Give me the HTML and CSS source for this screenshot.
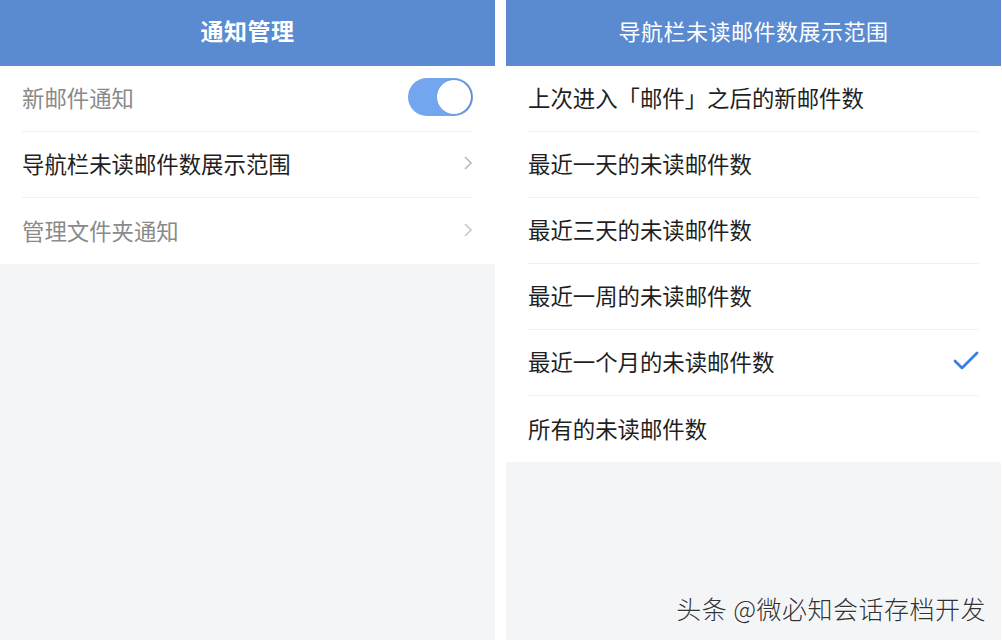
FILE: index.html
```html
<!DOCTYPE html>
<html lang="zh-CN">
<head>
  <meta charset="UTF-8" />
  <meta name="viewport" content="width=device-width, initial-scale=1.0"/>
  <title>通知管理</title>
  <link rel="stylesheet" href="styles.css">
</head>
<body>

  <div class="screens">

    <!-- 通知管理 -->
    <div class="screen">
      <div class="header header-bold">通知管理</div>
      <ul class="list">
        <li class="item muted">
          <span>新邮件通知</span>
          <span class="switch on"><span class="knob"></span></span>
        </li>
        <li class="item">
          <span>导航栏未读邮件数展示范围</span>
          <svg class="chevron" viewBox="0 0 10 16" width="10" height="16">
            <path d="M2 2 L8 8 L2 14" fill="none" stroke="#b9b9b9" stroke-width="1.6"/>
          </svg>
        </li>
        <li class="item muted last">
          <span>管理文件夹通知</span>
          <svg class="chevron" viewBox="0 0 10 16" width="10" height="16">
            <path d="M2 2 L8 8 L2 14" fill="none" stroke="#c8c8c8" stroke-width="1.6"/>
          </svg>
        </li>
      </ul>
    </div>

    <!-- 导航栏未读邮件数展示范围 -->
    <div class="screen">
      <div class="header">导航栏未读邮件数展示范围</div>
      <ul class="list">
        <li class="item">上次进入「邮件」之后的新邮件数</li>
        <li class="item">最近一天的未读邮件数</li>
        <li class="item">最近三天的未读邮件数</li>
        <li class="item">最近一周的未读邮件数</li>
        <li class="item">
          <span>最近一个月的未读邮件数</span>
          <svg class="check" viewBox="0 0 26 20" width="26" height="20">
            <path d="M2 10 L9 17 L24 2" fill="none" stroke="#3d7de0" stroke-width="2.8" stroke-linecap="round" stroke-linejoin="round"/>
          </svg>
        </li>
        <li class="item last">所有的未读邮件数</li>
      </ul>
    </div>

  </div>

  <div class="watermark">头条 @微必知会话存档开发</div>

</body>
</html>
```

FILE: styles.css
```css
/* Global Styles */
* {
  margin: 0;
  padding: 0;
  box-sizing: border-box;
}

body {
  font-family: "Noto Sans CJK SC", "Noto Sans", sans-serif;
  background: #fff;
  width: 1002px;
  height: 640px;
  overflow: hidden;
  position: relative;
}

/* Two phone screens side by side */
.screens {
  display: flex;
  gap: 11px;
  height: 640px;
}

.screen {
  width: 495px;
  height: 640px;
  background: #f4f5f7;
  display: flex;
  flex-direction: column;
}

/* Title bar */
.header {
  height: 66px;
  padding-bottom: 6px;
  background: #5a8bd0;
  color: #fff;
  font-size: 22px;
  display: flex;
  align-items: center;
  justify-content: center;
  letter-spacing: 0.5px;
}

.header-bold {
  font-size: 23px;
  font-weight: bold;
}

/* List rows */
.list {
  list-style: none;
  background: #fff;
  padding: 0 22px;
}

.item {
  height: 66px;
  padding-bottom: 3px;
  display: flex;
  align-items: center;
  justify-content: space-between;
  font-size: 22.4px;
  color: #1f1f1f;
  border-bottom: 1px solid #f0f0f2;
}

.item.last {
  border-bottom: none;
}

.item.muted {
  color: #8a8a8a;
}

/* Toggle switch */
.switch {
  width: 65px;
  height: 38px;
  border-radius: 19px;
  background: #73a6ee;
  display: flex;
  align-items: center;
  justify-content: flex-end;
  padding: 2px;
}

.knob {
  width: 34px;
  height: 34px;
  border-radius: 50%;
  background: #fff;
  box-shadow: 1px 0 2px rgba(40, 70, 120, 0.45);
}

/* Footer credit */
.watermark {
  position: absolute;
  right: 16px;
  bottom: 14px;
  font-size: 25px;
  font-weight: 300;
  color: #333;
  text-shadow: -1px 1px 0 #fff;
  letter-spacing: 0.5px;
}
```
